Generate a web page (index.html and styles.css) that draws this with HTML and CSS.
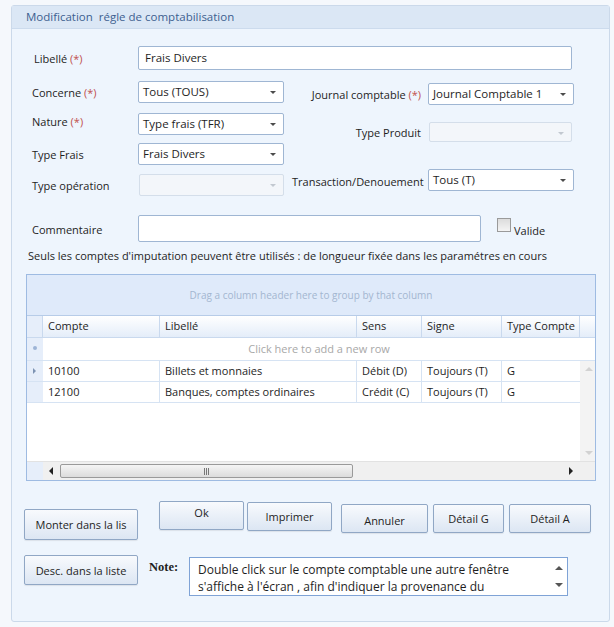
FILE: index.html
```html
<!DOCTYPE html>
<html>

<head>
    <title>Modification régle de comptabilisation</title>
    <meta charset="UTF-8">
    <link rel="stylesheet" href="styles.css">
</head>

<body>
    <div class="panel">
        <div class="panel-title">Modification&nbsp; régle de comptabilisation</div>

        <div class="panel-body">
            <div class="row row-libelle">
                <label class="lbl">Libellé <span class="req">(*)</span></label>
                <div class="textbox wide">Frais Divers</div>
            </div>

            <div class="fields">
                <div class="col-left">
                    <div class="row r-concerne">
                        <label class="lbl">Concerne <span class="req">(*)</span></label>
                        <div class="combo">Tous (TOUS)<span class="arrow"></span></div>
                    </div>
                    <div class="row r-nature">
                        <label class="lbl up">Nature <span class="req">(*)</span></label>
                        <div class="combo">Type frais (TFR)<span class="arrow"></span></div>
                    </div>
                    <div class="row r-typefrais">
                        <label class="lbl">Type Frais</label>
                        <div class="combo">Frais Divers<span class="arrow"></span></div>
                    </div>
                    <div class="row r-typeop">
                        <label class="lbl">Type opération</label>
                        <div class="combo disabled"><span class="arrow"></span></div>
                    </div>
                </div>

                <div class="col-right">
                    <div class="row r-journal">
                        <label class="lbl-r">Journal comptable <span class="req">(*)</span></label>
                        <div class="combo">Journal Comptable 1<span class="arrow"></span></div>
                    </div>
                    <div class="row r-produit">
                        <label class="lbl-r">Type Produit</label>
                        <div class="combo disabled"><span class="arrow"></span></div>
                    </div>
                    <div class="row r-transaction">
                        <label class="lbl-r">Transaction/Denouement</label>
                        <div class="combo">Tous (T)<span class="arrow"></span></div>
                    </div>
                </div>
            </div>

            <div class="row row-comment">
                <label class="lbl">Commentaire</label>
                <div class="textbox comment"></div>
                <span class="check"></span>
                <span class="valide">Valide</span>
            </div>

            <p class="info">Seuls les comptes d'imputation peuvent être utilisés : de longueur fixée dans les paramétres en cours</p>

            <div class="grid">
                <div class="group-panel">Drag a column header here to group by that column</div>
                <div class="grid-head">
                    <div class="c-ind"></div>
                    <div class="c-compte">Compte</div>
                    <div class="c-lib">Libellé</div>
                    <div class="c-sens">Sens</div>
                    <div class="c-signe">Signe</div>
                    <div class="c-type">Type Compte</div>
                    <div class="c-rest"></div>
                </div>
                <div class="new-row">
                    <div class="c-ind"><span class="dot"></span></div>
                    <div class="new-text">Click here to add a new row</div>
                </div>
                <div class="grid-main">
                    <div class="rows">
                        <div class="grid-row">
                            <div class="c-ind"><span class="tri"></span></div>
                            <div class="c-compte">10100</div>
                            <div class="c-lib">Billets et monnaies</div>
                            <div class="c-sens">Débit (D)</div>
                            <div class="c-signe">Toujours (T)</div>
                            <div class="c-type">G</div>
                        </div>
                        <div class="grid-row">
                            <div class="c-ind"></div>
                            <div class="c-compte">12100</div>
                            <div class="c-lib">Banques, comptes ordinaires</div>
                            <div class="c-sens">Crédit (C)</div>
                            <div class="c-signe">Toujours (T)</div>
                            <div class="c-type">G</div>
                        </div>
                    </div>
                    <div class="vscroll">
                        <span class="v-up"></span>
                        <span class="v-down"></span>
                    </div>
                </div>
                <div class="hscroll">
                    <div class="c-ind"></div>
                    <span class="h-left"></span>
                    <div class="h-thumb"><span class="grip"></span></div>
                    <span class="h-right"></span>
                </div>
            </div>

            <div class="bottom">
                <div class="side-buttons">
                    <button class="btn side b-monter">Monter dans la lis</button>
                    <button class="btn side b-desc">Desc. dans la liste</button>
                </div>
                <div class="bottom-right">
                    <div class="actions">
                        <button class="btn b-ok">Ok</button>
                        <button class="btn b-imprimer">Imprimer</button>
                        <button class="btn b-annuler">Annuler</button>
                        <button class="btn b-detg">Détail G</button>
                        <button class="btn b-deta">Détail A</button>
                    </div>
                    <div class="note-row">
                        <span class="note-label">Note:</span>
                        <div class="note">
                            <div class="note-text">Double click sur le compte comptable une autre fenêtre s'affiche à l'écran , afin d'indiquer la provenance du</div>
                            <div class="note-scroll">
                                <span class="n-up"></span>
                                <span class="n-down"></span>
                            </div>
                        </div>
                    </div>
                </div>
            </div>
        </div>
    </div>
</body>

</html>
```

FILE: styles.css
```css
body {
    margin: 0;
    background-color: #f5f8fc;
    font-family: "Open Sans", "Noto Sans", sans-serif;
    font-size: 11px;
    color: #1e1e1e;
}

.panel {
    margin: 5px 0 0 11px;
    width: 599px;
    height: 617px;
    background-color: #eef5fd;
    border: 1px solid #cbd9ea;
    border-radius: 3px;
    box-sizing: border-box;
}

.panel-title {
    height: 22px;
    line-height: 21px;
    padding-left: 14px;
    background-color: #dbe7f5;
    border-bottom: 1px solid #ccdbed;
    color: #3d5f90;
    font-size: 11.5px;
}

.row {
    display: flex;
    align-items: center;
}

.lbl {
    width: 106px;
    padding-left: 20px;
    flex-shrink: 0;
}

.lbl.up {
    margin-top: -6px;
}

.lbl-r {
    width: 129px;
    text-align: right;
    margin-right: 7px;
    flex-shrink: 0;
    white-space: nowrap;
}

.req {
    color: #c0504d;
}

.row-libelle {
    margin-top: 17px;
}

.row-libelle .lbl {
    padding-left: 22px;
    width: 104px;
}

.textbox {
    background-color: #fff;
    border: 1px solid #9fb6d3;
    border-radius: 2px;
    box-sizing: border-box;
    padding-left: 6px;
    font-size: 11.5px;
}

.textbox.wide {
    width: 434px;
    height: 24px;
    line-height: 22px;
}

.fields {
    display: flex;
}

.col-left {
    width: 280px;
}

.combo {
    position: relative;
    width: 146px;
    height: 22px;
    line-height: 20px;
    background-color: #fff;
    border: 1px solid #9fb6d3;
    border-radius: 2px;
    box-sizing: border-box;
    padding-left: 4px;
    font-size: 11.5px;
    white-space: nowrap;
}

.combo .arrow {
    position: absolute;
    right: 7px;
    top: 9px;
    border-left: 3px solid transparent;
    border-right: 3px solid transparent;
    border-top: 3px solid #4b4b4b;
}

.combo.disabled {
    background-color: #f3f6fa;
    border-color: #d4deea;
}

.combo.disabled .arrow {
    border-top-color: #c2c8d0;
}

.r-concerne {
    margin-top: 11px;
}

.r-nature {
    margin-top: 10px;
}

.r-typefrais {
    margin-top: 8px;
}

.r-typeop {
    margin-top: 9px;
}

.r-typeop .combo {
    margin-left: 1px;
    width: 145px;
}

.r-journal {
    margin-top: 13px;
}

.r-produit {
    margin-top: 17px;
}

.r-produit .combo {
    width: 143px;
    height: 20px;
    margin-left: 1px;
}

.r-transaction {
    margin-top: 27px;
}

.r-transaction .lbl-r {
    margin-top: 3px;
}

.row-comment {
    margin-top: 19px;
}

.row-comment .lbl {
    margin-top: 1px;
}

.textbox.comment {
    width: 343px;
    height: 27px;
}

.check {
    width: 12px;
    height: 12px;
    margin-left: 16px;
    align-self: flex-start;
    margin-top: 3px;
    border: 1px solid #9a9a9a;
    background: linear-gradient(#dcdcdc, #f4f4f4);
}

.valide {
    margin-left: 3px;
    align-self: flex-end;
    margin-bottom: 4px;
}

.info {
    margin: 6px 0 0 16px;
    font-size: 11px;
}

.grid {
    margin: 11px 0 0 14px;
    width: 570px;
    height: 207px;
    border: 1px solid #9ebbe2;
    box-sizing: border-box;
    background-color: #fff;
    display: flex;
    flex-direction: column;
}

.group-panel {
    height: 40px;
    line-height: 40px;
    background-color: #dfeafa;
    border-bottom: 1px solid #b7cce8;
    text-align: center;
    color: #a3b6d0;
    font-size: 10px;
}

.grid-head {
    display: flex;
    height: 21px;
    line-height: 20px;
    background: linear-gradient(#ffffff, #e4edf9);
    border-bottom: 1px solid #c9d9ee;
}

.grid-head > div {
    border-right: 1px solid #c9d9ee;
    padding-left: 5px;
    box-sizing: border-box;
}

.grid-head .c-rest {
    border-right: none;
    flex: 1;
}

.c-ind {
    width: 16px;
    flex-shrink: 0;
    background-color: #e6eefa;
    position: relative;
}

.c-compte {
    width: 117px;
}

.c-lib {
    width: 197px;
}

.c-sens {
    width: 65px;
}

.c-signe {
    width: 80px;
}

.c-type {
    width: 78px;
}

.new-row {
    display: flex;
    height: 22px;
    line-height: 21px;
    border-bottom: 1px solid #d6e3f3;
}

.new-text {
    flex: 1;
    text-align: center;
    color: #a8a8a8;
}

.dot {
    position: absolute;
    left: 6px;
    top: 8px;
    width: 4px;
    height: 4px;
    border-radius: 2px;
    background-color: #9db4d6;
}

.grid-main {
    flex: 1;
    display: flex;
}

.rows {
    flex: 1;
}

.grid-row {
    display: flex;
    height: 20px;
    line-height: 19px;
    border-bottom: 1px solid #d6e3f3;
}

.grid-row > div {
    border-right: 1px solid #d6e3f3;
    padding-left: 5px;
    box-sizing: border-box;
}

.grid-row > .c-type {
    border-right: none;
}

.grid-row > .c-ind {
    padding-left: 0;
    border-right: none;
    background-color: #e6eefa;
}

.tri {
    position: absolute;
    left: 6px;
    top: 7px;
    border-top: 3px solid transparent;
    border-bottom: 3px solid transparent;
    border-left: 3px solid #7d93b3;
}

.vscroll {
    width: 17px;
    position: relative;
    background-color: #f3f3f3;
}

.v-up,
.v-down,
.n-up,
.n-down {
    position: absolute;
    left: 5px;
    border-left: 4px solid transparent;
    border-right: 4px solid transparent;
}

.v-up {
    top: 6px;
    border-bottom: 4px solid #d2d2d2;
}

.v-down {
    bottom: 6px;
    border-top: 4px solid #d2d2d2;
}

.hscroll {
    height: 18px;
    display: flex;
    align-items: center;
    position: relative;
    background-color: #f0f0f0;
    border-top: 1px solid #e2e2e2;
}

.hscroll .c-ind {
    height: 100%;
}

.h-left {
    margin-left: 6px;
    border-top: 4px solid transparent;
    border-bottom: 4px solid transparent;
    border-right: 4px solid #222;
}

.h-thumb {
    margin-left: 7px;
    width: 293px;
    height: 14px;
    border: 1px solid #9a9a9a;
    border-radius: 2px;
    box-sizing: border-box;
    background: linear-gradient(#f5f5f5, #dcdcdc);
    display: flex;
    justify-content: center;
    align-items: center;
}

.grip {
    width: 5px;
    height: 7px;
    background: repeating-linear-gradient(90deg, #777 0 1px, transparent 1px 2px);
}

.h-right {
    margin-left: auto;
    margin-right: 22px;
    border-top: 4px solid transparent;
    border-bottom: 4px solid transparent;
    border-left: 4px solid #222;
}

.bottom {
    display: flex;
    margin-top: 20px;
}

.btn {
    font-family: "Open Sans", "Noto Sans", sans-serif;
    font-size: 11px;
    color: #1e1e1e;
    background: linear-gradient(#f8fafd, #dce6f3);
    border: 1px solid #90a7c5;
    border-radius: 2px;
    padding: 0;
    height: 30px;
    box-shadow: 0 1px 1px rgba(0, 0, 0, 0.08);
}

.side-buttons {
    width: 135px;
    padding-left: 12px;
    box-sizing: border-box;
    display: flex;
    flex-direction: column;
}

.btn.side {
    width: 114px;
}

.b-monter {
    margin-top: 8px;
    height: 31px;
}

.b-desc {
    margin-top: 15px;
}

.bottom-right {
    flex: 1;
}

.actions {
    display: flex;
    align-items: flex-start;
    padding-left: 12px;
}

.b-ok {
    width: 85px;
    height: 29px;
    padding-bottom: 6px;
}

.b-imprimer {
    width: 85px;
    margin-left: 3px;
    margin-top: 1px;
    height: 29px;
}

.b-annuler {
    width: 87px;
    margin-left: 9px;
    margin-top: 3px;
    height: 29px;
    padding-top: 4px;
}

.b-detg {
    width: 71px;
    margin-left: 5px;
    margin-top: 3px;
    height: 29px;
}

.b-deta {
    width: 82px;
    margin-left: 5px;
    margin-top: 3px;
    height: 29px;
}

.note-row {
    display: flex;
    margin-top: 24px;
    padding-left: 2px;
}

.note-label {
    font-family: "Liberation Serif", serif;
    font-weight: bold;
    font-size: 12.5px;
    width: 40px;
    margin-top: 3px;
}

.note {
    width: 379px;
    height: 39px;
    background-color: #fff;
    border: 1px solid #7fa3d6;
    box-sizing: border-box;
    display: flex;
}

.note-text {
    flex: 1;
    padding: 3px 0 0 8px;
    font-size: 12px;
    line-height: 17px;
    overflow: hidden;
}

.note-scroll {
    width: 17px;
    position: relative;
}

.n-up {
    top: 8px;
    border-bottom: 4px solid #555;
}

.n-down {
    bottom: 8px;
    border-top: 4px solid #555;
}
```
